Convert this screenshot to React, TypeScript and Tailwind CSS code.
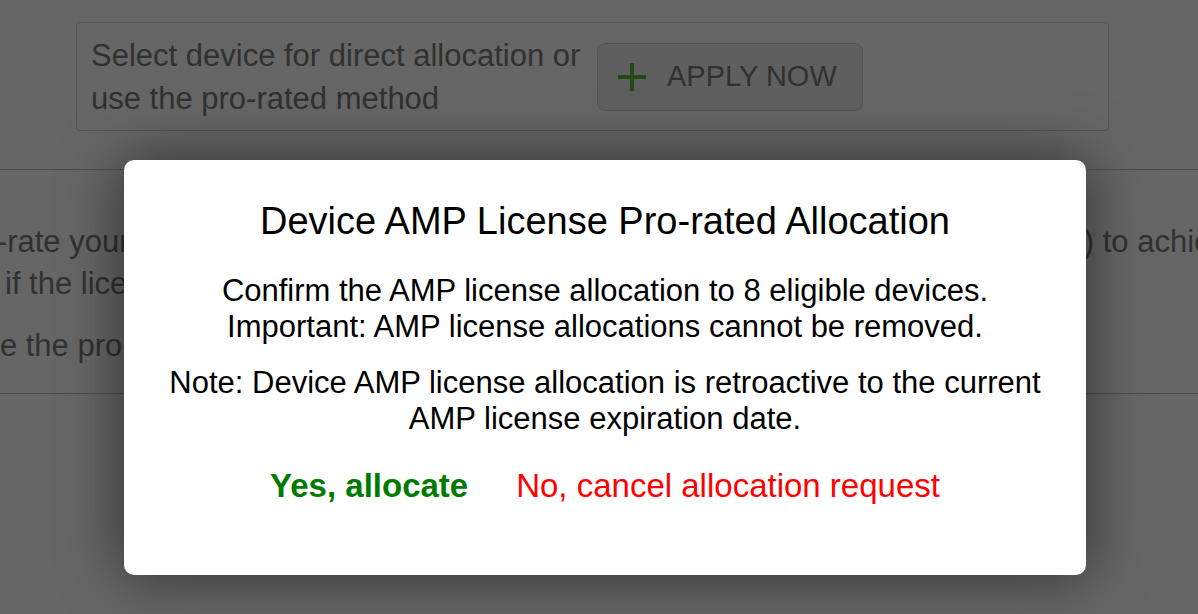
const PlusIcon = () => (
    <svg width="28" height="28" viewBox="0 0 28 28" className="shrink-0">
        <path d="M14 0v28M0 14h28" stroke="#58b928" strokeWidth="4" />
    </svg>
)

const App = () => {
    return (
        <div className="relative h-[614px] w-full overflow-hidden bg-white font-['Liberation_Sans',Arial,sans-serif] text-[#7a7a7a]">
            {/* page underneath */}
            <div className="pt-[22px] pl-[76px] pr-[89px]">
                <div className="flex h-[109px] items-center gap-[6px] rounded border border-[#d4d4d4] px-[14px]">
                    <p className="w-[500px] text-[31px] leading-[43px]">
                        Select device for direct allocation or use the pro-rated method
                    </p>
                    <button className="flex h-[68px] w-[266px] shrink-0 items-center gap-[21px] whitespace-nowrap rounded-lg border border-[#d4d4d4] bg-[#eeeeee] px-[20px] text-[29px] text-[#7a7a7a]">
                        <PlusIcon />
                        APPLY NOW
                    </button>
                </div>
            </div>
            <div className="mt-[38px] border-y border-[#c4c4c4] pb-[26px] pt-[51px] text-[31px] leading-[42px]">
                <div className="flex justify-between whitespace-nowrap">
                    <span className="-ml-[48px]">pro-rate your licenses</span>
                    <span className="-mr-[46px]">(s) to achieve</span>
                </div>
                <div className="ml-[5px] whitespace-nowrap">if the license</div>
                <div className="mt-[20px] -ml-[38px] whitespace-nowrap">Use the pro-rated</div>
            </div>

            {/* overlay */}
            <div className="absolute inset-0 flex justify-center bg-black/60 pt-[160px]">
                <div className="ml-[12px] h-[415px] w-[962px] rounded-[10px] bg-white pt-[37px] text-center text-black shadow-[0_0_60px_rgba(0,0,0,0.55)]">
                    <h2 className="text-[38px] leading-[48px]">Device AMP License Pro-rated Allocation</h2>
                    <p className="mt-[28px] text-[31px] leading-[36px]">
                        Confirm the AMP license allocation to 8 eligible devices.
                        <br />
                        Important: AMP license allocations cannot be removed.
                    </p>
                    <p className="mt-[20px] text-[31px] leading-[36px]">
                        Note: Device AMP license allocation is retroactive to the current
                        <br />
                        AMP license expiration date.
                    </p>
                    <div className="mt-[29px] flex justify-center gap-[48px] text-[33px] leading-[40px]">
                        <button className="font-bold text-[#007a00]">Yes, allocate</button>
                        <button className="text-[#ff0000]">No, cancel allocation request</button>
                    </div>
                </div>
            </div>
        </div>
    )
}

export default App
